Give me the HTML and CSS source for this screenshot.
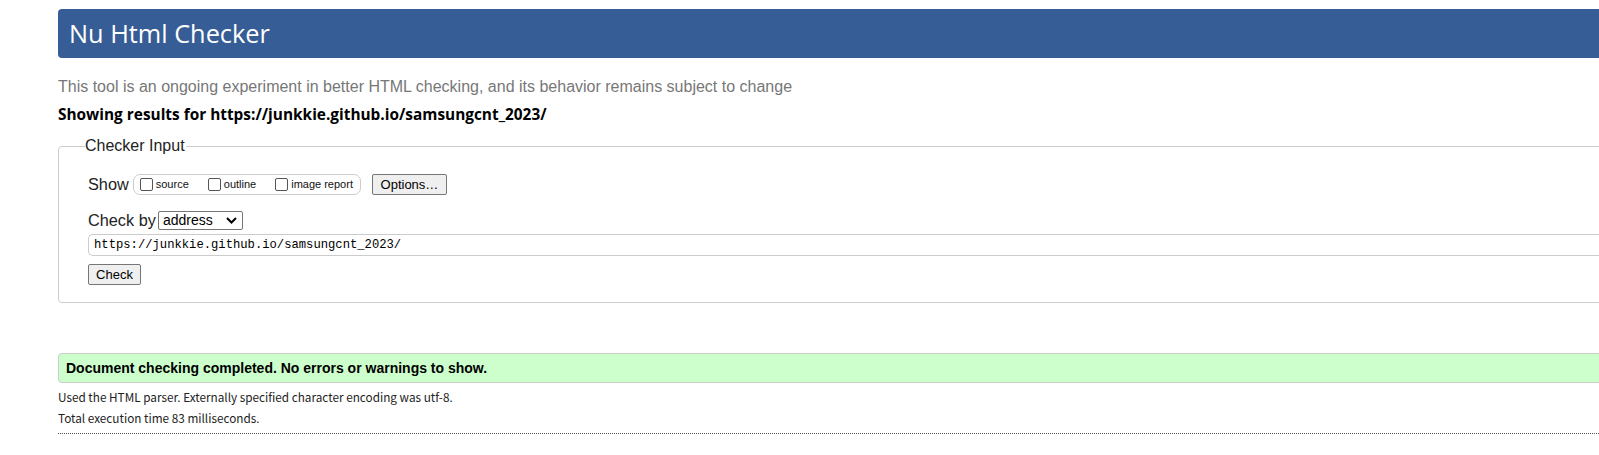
FILE: index.html
```html
<!DOCTYPE html>
<html lang="en">
<head>
<meta charset="utf-8">
<title>Nu Html Checker</title>
<link rel="stylesheet" href="styles.css">
</head>
<body>
<div class="page">
  <h1 class="header">Nu Html Checker</h1>
  <p class="tagline">This tool is an ongoing experiment in better HTML checking, and its behavior remains subject to change</p>
  <p class="results-for">Showing results for https://junkkie.github.io/samsungcnt_2023/</p>
  <fieldset class="input-set">
    <legend class="legend">Checker Input</legend>
    <div class="show-row">
      <span class="row-label">Show</span>
      <span class="check-group">
        <label class="opt"><span class="box"></span>source</label>
        <label class="opt"><span class="box"></span>outline</label>
        <label class="opt"><span class="box"></span>image report</label>
      </span>
      <span class="btn btn-options">Options…</span>
    </div>
    <div class="checkby-row">
      <span class="row-label">Check by</span>
      <span class="select">address<svg class="chev" width="11" height="7" viewBox="0 0 11 7"><path d="M1 1 L5.5 5.5 L10 1" fill="none" stroke="#000" stroke-width="2"/></svg></span>
    </div>
    <div class="url-input">https://junkkie.github.io/samsungcnt_2023/</div>
    <span class="btn btn-check">Check</span>
  </fieldset>
  <div class="success">Document checking completed. No errors or warnings to show.</div>
  <p class="detail first">Used the HTML parser. Externally specified character encoding was utf-8.</p>
  <p class="detail">Total execution time 83 milliseconds.</p>
  <hr class="dotted">
</div>
</body>
</html>
```
FILE: styles.css
```css
html, body {
  margin: 0;
  padding: 0;
  overflow: hidden;
  background: #fff;
}
.page {
  margin-left: 58px;
  margin-right: -40px;
  padding-top: 9px;
  font-family: "Liberation Sans", Arial, sans-serif;
  color: #000;
}
.header {
  margin: 0;
  height: 49px;
  box-sizing: border-box;
  background: #365d95;
  color: #fff;
  border-radius: 4px;
  font-family: "Open Sans", sans-serif;
  font-weight: 400;
  font-size: 25.3px;
  line-height: 49px;
  padding-left: 11px;
}
.tagline {
  margin: 19px 0 0;
  font-size: 16px;
  line-height: 20px;
  color: #777;
}
.results-for {
  margin: 8px 0 0;
  font-family: "Open Sans", sans-serif;
  font-weight: 700;
  font-size: 15.4px;
  line-height: 20px;
  color: #000;
}
.input-set {
  margin: 12px 0 0;
  padding: 0 0 0 29px;
  border: 1px solid #ccc;
  border-radius: 4px;
  height: 166px;
  box-sizing: border-box;
}
.legend {
  padding: 0 1px 0 0;
  margin-left: -3px;
  font-size: 16px;
  line-height: 18px;
  color: #222;
}
.show-row {
  display: flex;
  align-items: center;
  margin-top: 18px;
  height: 22px;
}
.row-label {
  font-size: 16.3px;
  color: #222;
}
.check-group {
  display: flex;
  align-items: center;
  gap: 19px;
  margin-left: 4px;
  height: 21px;
  box-sizing: border-box;
  border: 1px solid #ccc;
  border-radius: 7px;
  padding: 0 7px 0 6px;
}
.opt {
  display: flex;
  align-items: center;
  gap: 3px;
  font-size: 11px;
  color: #111;
}
.box {
  width: 11px;
  height: 11px;
  border: 1px solid #555;
  border-radius: 2px;
  background: #fff;
}
.btn {
  display: inline-flex;
  align-items: center;
  justify-content: center;
  box-sizing: border-box;
  border: 1px solid #767676;
  border-radius: 2px;
  background: #efefef;
  font-size: 13px;
  color: #000;
}
.btn-options {
  margin-left: 11px;
  width: 75px;
  height: 21px;
}
.checkby-row {
  display: flex;
  align-items: center;
  margin-top: 15px;
  height: 20px;
}
.select {
  display: inline-flex;
  align-items: center;
  justify-content: space-between;
  box-sizing: border-box;
  margin-left: 2px;
  width: 85px;
  height: 19px;
  border: 1px solid #767676;
  border-radius: 2px;
  padding: 0 5px 0 4px;
  font-size: 14px;
  color: #000;
  background: #fff;
}
.url-input {
  margin-top: 4px;
  height: 22px;
  box-sizing: border-box;
  border: 1px solid #ccc;
  border-right: none;
  border-radius: 5px 0 0 5px;
  padding-left: 5px;
  font-family: "Liberation Mono", "DejaVu Sans Mono", monospace;
  font-size: 12.2px;
  line-height: 20px;
  color: #000;
}
.btn-check {
  margin-top: 8px;
  width: 53px;
  height: 21px;
}
.success {
  margin-top: 50px;
  height: 30px;
  box-sizing: border-box;
  border: 1px solid #ccc;
  border-radius: 4px;
  background: #ccffcc;
  padding-left: 7px;
  font-weight: 700;
  font-size: 14px;
  line-height: 28px;
  color: #000;
}
.detail {
  margin: 0;
  font-family: "Noto Sans CJK KR", "Noto Sans", sans-serif;
  font-size: 11.75px;
  line-height: 21px;
  color: #222;
}
.detail.first {
  margin-top: 3px;
}
.dotted {
  margin: 5px 0 0;
  border: none;
  border-top: 1px dotted #555;
  height: 0;
}
```
